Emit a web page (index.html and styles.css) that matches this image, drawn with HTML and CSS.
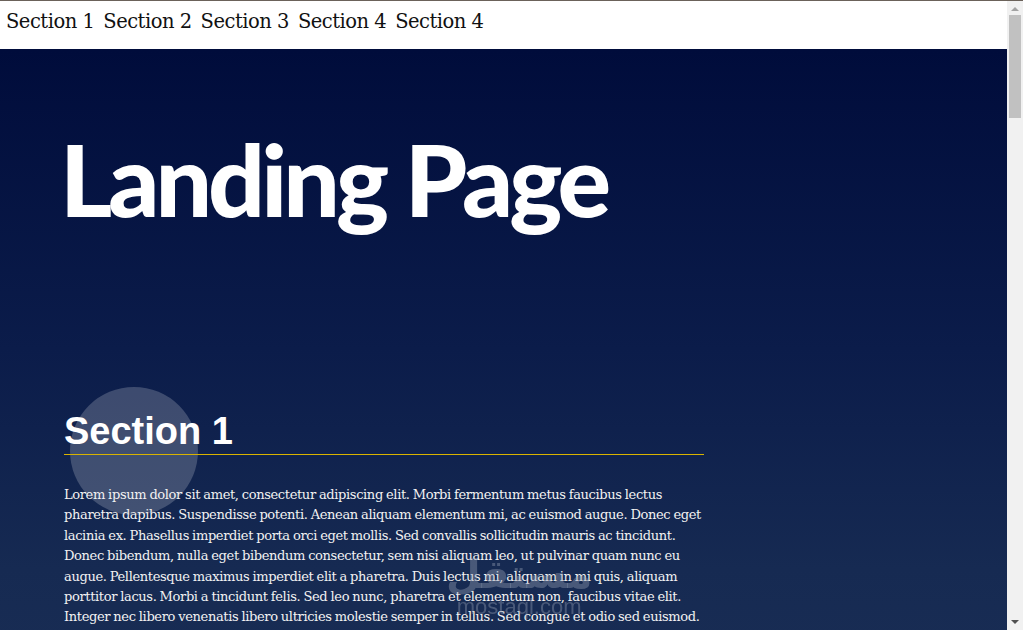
FILE: index.html
```html
<!DOCTYPE html>
<html lang="en">
<head>
<meta charset="utf-8">
<title>Landing Page</title>
<link rel="stylesheet" href="styles.css">
</head>
<body>
<div class="page">
  <header class="page-header">
    <nav class="navbar">
      <ul class="nav-list">
        <li><a class="nav-link" href="#s1">Section 1</a></li>
        <li><a class="nav-link" href="#s2">Section 2</a></li>
        <li><a class="nav-link" href="#s3">Section 3</a></li>
        <li><a class="nav-link" href="#s4">Section 4</a></li>
        <li><a class="nav-link" href="#s4">Section 4</a></li>
      </ul>
    </nav>
  </header>
  <main class="main">
    <header class="hero">
      <h1 class="hero-title">Landing Page</h1>
    </header>
    <section class="section" id="s1">
      <div class="section-inner">
        <h2 class="section-title">Section 1</h2>
        <p class="section-text">Lorem ipsum dolor sit amet, consectetur adipiscing elit. Morbi fermentum metus faucibus lectus pharetra dapibus. Suspendisse potenti. Aenean aliquam elementum mi, ac euismod augue. Donec eget lacinia ex. Phasellus imperdiet porta orci eget mollis. Sed convallis sollicitudin mauris ac tincidunt. Donec bibendum, nulla eget bibendum consectetur, sem nisi aliquam leo, ut pulvinar quam nunc eu augue. Pellentesque maximus imperdiet elit a pharetra. Duis lectus mi, aliquam in mi quis, aliquam porttitor lacus. Morbi a tincidunt felis. Sed leo nunc, pharetra et elementum non, faucibus vitae elit. Integer nec libero venenatis libero ultricies molestie semper in tellus. Sed congue et odio sed euismod.</p>
      </div>
    </section>
  </main>
</div>
<div class="scrollbar" aria-hidden="true">
  <span class="sb-arrow sb-up"></span>
  <span class="sb-thumb"></span>
  <span class="sb-arrow sb-down"></span>
</div>
<div class="watermark" aria-hidden="true">
  <span class="wm-ar">مستقل</span>
  <span class="wm-en">mostaql.com</span>
</div>
</body>
</html>
```

FILE: styles.css
```css
html, body {
  margin: 0;
  padding: 0;
}
html {
  overflow: hidden;
}
body {
  font-family: "DejaVu Serif", "Liberation Serif", serif;
  background: #1b2e54;
  border-top: 1px solid #6b625a;
}
.page {
  margin-right: 16px;
}
.page-header {
  background: #fff;
  height: 48px;
}
.nav-list {
  list-style: none;
  margin: 0;
  padding: 0 0 0 6px;
  display: flex;
  gap: 9px;
}
.nav-link {
  display: block;
  padding-top: 9px;
  font-size: 19.5px;
  letter-spacing: -0.5px;
  color: #111;
  text-decoration: none;
}
.main {
  background: linear-gradient(180deg, #000c3b 0px, #0b1c4a 300px, #162a52 520px, #1b2f56 700px, #1c3058 1200px);
  color: #fff;
  min-height: 900px;
}
.hero {
  padding: 79px 0 0 60px;
  height: 200px;
}
.hero-title {
  margin: 0;
  font-family: "Lato", "Open Sans", sans-serif;
  font-weight: 900;
  font-size: 100px;
  line-height: 1;
  letter-spacing: -4px;
}
.section {
  padding: 0 64px;
}
.section-inner {
  width: 640px;
  position: relative;
}
.section-inner::before {
  content: "";
  position: absolute;
  left: 6px;
  top: 59px;
  width: 128px;
  height: 128px;
  border-radius: 50%;
  background: rgba(255, 255, 255, 0.2);
}
.section-title {
  position: relative;
  margin: 0;
  padding-top: 82px;
  font-family: "Liberation Sans", Arial, sans-serif;
  font-weight: 700;
  font-size: 38px;
  line-height: 42px;
  padding-bottom: 2px;
  border-bottom: 1px solid #d9b300;
}
.section-text {
  position: relative;
  margin: 30px 0 0;
  font-size: 13.05px;
  line-height: 20.4px;
  letter-spacing: -0.38px;
  word-spacing: -0.6px;
  color: #f2f2f2;
}
.scrollbar {
  position: fixed;
  top: 1px;
  right: 0;
  bottom: 0;
  width: 16px;
  background: #f1f1f1;
  display: flex;
  flex-direction: column;
  align-items: center;
}
.sb-arrow {
  width: 0;
  height: 0;
  border-left: 4px solid transparent;
  border-right: 4px solid transparent;
}
.sb-up {
  margin-top: 6px;
  border-bottom: 4px solid #a3a3a3;
}
.sb-down {
  margin-top: auto;
  margin-bottom: 6px;
  border-top: 4px solid #505050;
}
.sb-thumb {
  margin-top: 4px;
  width: 12px;
  height: 103px;
  background: #c1c1c1;
}
.watermark {
  position: fixed;
  left: 446px;
  top: 552px;
  display: flex;
  flex-direction: column;
  align-items: center;
  color: rgba(150, 160, 180, 0.4);
  pointer-events: none;
  font-family: "Liberation Sans", "DejaVu Sans", sans-serif;
}
.wm-ar {
  font-size: 40px;
  line-height: 44px;
  font-weight: 700;
}
.wm-en {
  font-size: 22px;
  line-height: 22px;
}
```
